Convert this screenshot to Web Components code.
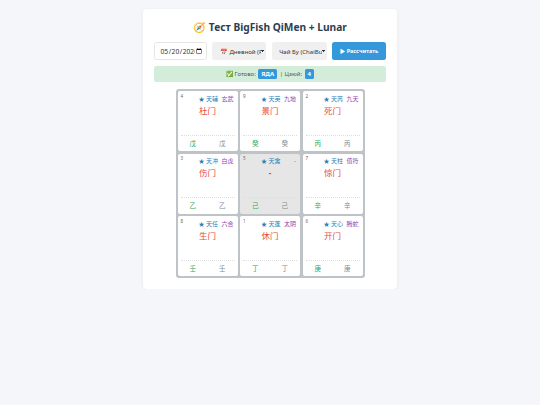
<!DOCTYPE html>
<html>
<head>
<meta charset="utf-8">
<title>QiMen</title>
<style>
  html, body { margin: 0; background: #f4f6f9; }
  body { font-family: "Noto Sans", "Noto Sans CJK SC", sans-serif; }
</style>
</head>
<body>
<qimen-app>
  <qimen-cell num="4" star="天辅" god="玄武" door="杜门" sky="戊" earth="戊"></qimen-cell>
  <qimen-cell num="9" star="天英" god="九地" door="景门" sky="癸" earth="癸"></qimen-cell>
  <qimen-cell num="2" star="天芮" god="九天" door="死门" sky="丙" earth="丙"></qimen-cell>
  <qimen-cell num="3" star="天冲" god="白虎" door="伤门" sky="乙" earth="乙"></qimen-cell>
  <qimen-cell num="5" star="天禽" god="-" door="-" sky="己" earth="己" center></qimen-cell>
  <qimen-cell num="7" star="天柱" god="值符" door="惊门" sky="辛" earth="辛"></qimen-cell>
  <qimen-cell num="8" star="天任" god="六合" door="生门" sky="壬" earth="壬"></qimen-cell>
  <qimen-cell num="1" star="天蓬" god="太阴" door="休门" sky="丁" earth="丁"></qimen-cell>
  <qimen-cell num="6" star="天心" god="腾蛇" door="开门" sky="庚" earth="庚"></qimen-cell>
</qimen-app>
<script>
  class QimenCell extends HTMLElement {
    constructor() {
      super();
      const shadow = this.attachShadow({ mode: "open" });
      const a = (name) => this.getAttribute(name) || "";
      shadow.innerHTML = `
        <style>
          :host {
            display: flex;
            flex-direction: column;
            box-sizing: border-box;
            height: 120px;
            padding: 5px 6px 0;
            background: #fff;
            border-radius: 4px;
            font-family: "Noto Sans", "Noto Sans CJK SC", sans-serif;
          }
          :host([center]) { background: #e6e6e6; }
          .top { display: flex; justify-content: space-between; height: 22px; }
          .num { font-size: 9px; line-height: 10px; color: #666; }
          .info { display: flex; gap: 7px; font-size: 12px; line-height: 18px; padding: 2px 2px 0 0; }
          .star { color: #2980b9; }
          .god { color: #8e44ad; min-width: 24px; text-align: right; }
          .door { text-align: center; font-size: 17px; line-height: 24px; color: #e74c3c; flex: 1; }
          :host([center]) .door { font-weight: 700; }
          .stems {
            display: flex;
            justify-content: space-between;
            border-top: 1px dotted #dcdfe1;
            height: 33px;
            padding: 0 18px 3px;
            box-sizing: border-box;
            align-items: center;
            font-size: 13px;
          }
          .sky { color: #27ae60; }
          .earth { color: #7f8c8d; }
        </style>
        <div class="top">
          <span class="num">${a("num")}</span>
          <span class="info"><span class="star">★ ${a("star")}</span><span class="god">${a("god")}</span></span>
        </div>
        <div class="door">${a("door")}</div>
        <div class="stems"><span class="sky">${a("sky")}</span><span class="earth">${a("earth")}</span></div>
      `;
    }
  }

  class QimenApp extends HTMLElement {
    constructor() {
      super();
      const shadow = this.attachShadow({ mode: "open" });
      // sizes are written at twice the photographed scale, zoom brings them down
      shadow.innerHTML = `
        <style>
          :host {
            display: block;
            zoom: 0.5;
            box-sizing: border-box;
            width: 508px;
            height: 560px;
            margin: 18px auto 0;
            padding: 22px 22px 0;
            background: #fff;
            border-radius: 8px;
            box-shadow: 0 2px 8px rgba(0,0,0,.06);
            font-family: "Noto Sans", "Noto Sans CJK SC", sans-serif;
          }
          h1 {
            margin: 0 0 12px;
            height: 32px;
            line-height: 28px;
            text-align: center;
            font-size: 20.4px;
            font-weight: 700;
            color: #2c3e50;
          }
          .controls { display: grid; grid-template-columns: 106px 108px 110px 108px; gap: 10px; height: 36px; justify-content: space-between; }
          input, select, button {
            box-sizing: border-box;
            height: 36px;
            margin: 0;
            min-width: 0;
            width: 100%;
            border-radius: 5px;
            font-family: inherit;
            font-size: 13.33px;
            color: #333;
          }
          input { border: 1px solid #e6e6e6; background: #fff; padding: 0 4px 0 10px; }
          select {
            appearance: none;
            border: 0;
            padding: 0 10px 0 15px;
            font-size: 12.2px;
            background-color: #f0f0f0;
            background-image: linear-gradient(45deg, transparent 50%, #333 50%), linear-gradient(135deg, #333 50%, transparent 50%);
            background-size: 4px 4px;
            background-position: right 6px center, right 2px center;
            background-repeat: no-repeat;
          }
          button { border: 0; background: #3498db; color: #fff; font-weight: 700; font-size: 11px; padding: 0; }
          .status {
            display: flex;
            justify-content: center;
            align-items: center;
            gap: 5px;
            height: 32px;
            margin: 12px 0 14px;
            background: #d4edda;
            border-radius: 4px;
            font-size: 12px;
            color: #555;
          }
          .tag { background: #3498db; color: #fff; font-weight: 700; border-radius: 3px; padding: 2px 6px; line-height: 16px; }
          .grid {
            display: grid;
            grid-template-columns: repeat(3, 120px);
            gap: 5px;
            width: max-content;
            margin: 0 auto;
            padding: 4px;
            background: #bdc3c7;
            border-radius: 6px;
          }
        </style>
        <h1>🧭 Тест BigFish QiMen + Lunar</h1>
        <div class="controls">
          <input type="date" value="2026-05-20">
          <select><option>📅 Дневной (Rishi)</option></select>
          <select><option>Чай Бу (ChaiBu)</option></select>
          <button>▶ Рассчитать</button>
        </div>
        <div class="status">✅ Готово: <span class="tag">ЯДА</span> | Цзюй: <span class="tag">4</span></div>
        <div class="grid"><slot></slot></div>
      `;
    }
  }

  customElements.define("qimen-cell", QimenCell);
  customElements.define("qimen-app", QimenApp);
</script>
</body>
</html>
